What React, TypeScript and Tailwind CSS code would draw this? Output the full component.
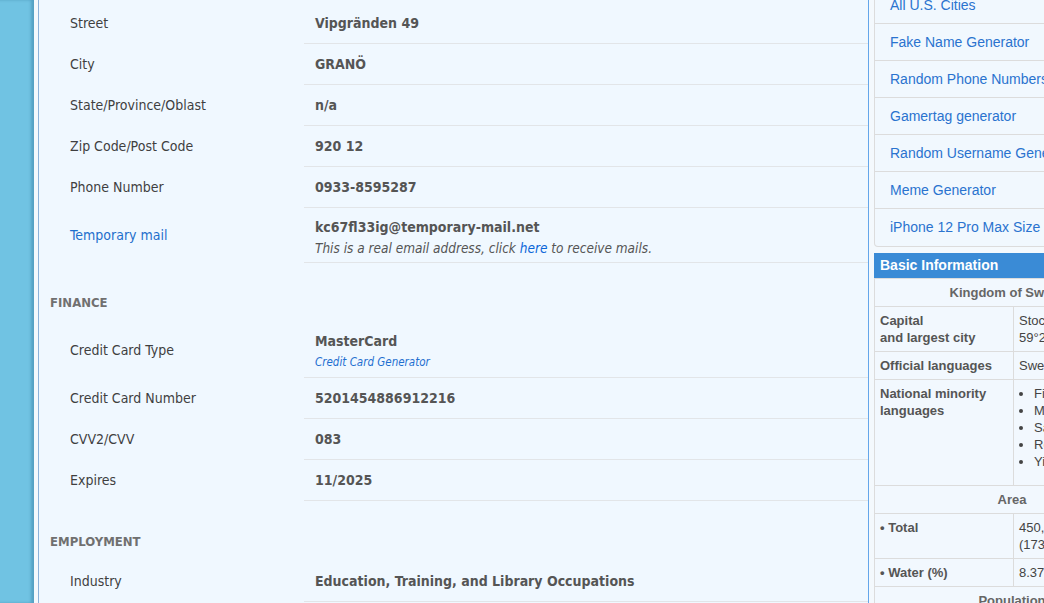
const mainFont = { fontFamily: '"DejaVu Sans Condensed", "DejaVu Sans", sans-serif' };

type Row = { label: string; value: string; h: string; link?: boolean; sub?: React.ReactNode };

const personal: Row[] = [
  { label: "Street", value: "Vipgränden 49", h: "h-[41px]" },
  { label: "City", value: "GRANÖ", h: "h-[41px]" },
  { label: "State/Province/Oblast", value: "n/a", h: "h-[41px]" },
  { label: "Zip Code/Post Code", value: "920 12", h: "h-[41px]" },
  { label: "Phone Number", value: "0933-8595287", h: "h-[41px]" },
  {
    label: "Temporary mail",
    value: "kc67fl33ig@temporary-mail.net",
    h: "h-[55px]",
    link: true,
    sub: (
      <div className="mt-[1px] text-[13.5px] italic leading-[20px] text-[#555]">
        This is a real email address, click <span className="text-[#0a66d8]">here</span> to receive mails.
      </div>
    ),
  },
];

const finance: Row[] = [
  {
    label: "Credit Card Type",
    value: "MasterCard",
    h: "h-[56px]",
    sub: <div className="mt-[1px] text-[11.5px] italic leading-[21px] text-[#1f6fd0]">Credit Card Generator</div>,
  },
  { label: "Credit Card Number", value: "5201454886912216", h: "h-[41px]" },
  { label: "CVV2/CVV", value: "083", h: "h-[41px]" },
  { label: "Expires", value: "11/2025", h: "h-[41px]" },
];

const employment: Row[] = [
  { label: "Industry", value: "Education, Training, and Library Occupations", h: "h-[41px]" },
];

function InfoRows({ rows }: { rows: Row[] }) {
  return (
    <div className="grid grid-cols-[265px_1fr]">
      {rows.map((r) => (
        <div key={r.label} className="contents">
          <div className={`${r.h} flex items-center pl-[31px] text-[14px] ${r.link ? "text-[#1f6fcc]" : "text-[#3f3f3f]"}`}>
            {r.label}
          </div>
          <div
            className={`${r.h} flex flex-col justify-center border-b border-[#e2e5e8] pl-[11px] ${r.sub ? "pt-[5px]" : ""}`}
          >
            <div className="text-[14px] font-bold leading-[20px] text-[#555]">{r.value}</div>
            {r.sub}
          </div>
        </div>
      ))}
    </div>
  );
}

function Heading({ text, h }: { text: string; h: string }) {
  return (
    <div className={`${h} flex items-end pb-[11px] pl-[11px] text-[13px] font-bold leading-4 text-[#707070]`}>{text}</div>
  );
}

const links = [
  "All U.S. Cities",
  "Fake Name Generator",
  "Random Phone Numbers",
  "Gamertag generator",
  "Random Username Generator",
  "Meme Generator",
  "iPhone 12 Pro Max Size",
];

const th = "border border-[#dcdcdc] px-[5px] py-[5px] align-top text-left font-bold text-[#555] leading-[17px]";
const td = "border border-[#dcdcdc] px-[5px] py-[5px] align-top text-[#444] leading-[17px]";
const center = "border border-[#dcdcdc] px-[5px] py-[5px] text-center font-bold text-[#666] leading-[17px]";

export default function App() {
  return (
    <div className="flex h-[603px] w-[1044px] overflow-hidden bg-[#f4f9fd]">
      <div className="w-[34px] shrink-0 bg-[#70c3e3] shadow-[inset_-3px_0_3px_rgba(0,60,100,0.25)]" />
      <div className="w-[4px] shrink-0" />
      <main
        className="w-[831px] shrink-0 border-l border-r border-l-[#8cb2da] border-r-[#64a6ea] bg-[#f0f8ff] pt-[3px]"
        style={mainFont}
      >
        <InfoRows rows={personal} />
        <Heading text="FINANCE" h="h-[59px]" />
        <InfoRows rows={finance} />
        <Heading text="EMPLOYMENT" h="h-[60px]" />
        <InfoRows rows={employment} />
      </main>
      <div className="w-[5px] shrink-0" />
      <aside className="w-[276px] shrink-0 font-['Liberation_Sans',Arial,sans-serif]">
        <div className="-mt-[13px] rounded-b-[4px] border-x border-b border-[#dcdcdc] bg-[#f1f8fe]">
          {links.map((l, i) => (
            <div
              key={l}
              className={`flex h-[37px] items-center whitespace-nowrap pl-[15px] text-[14px] text-[#2a73cf] ${
                i < links.length - 1 ? "border-b border-[#dcdcdc]" : ""
              }`}
            >
              {l}
            </div>
          ))}
        </div>
        <div className="mt-[6px] flex h-[25px] items-center bg-[#3a8bd6] pl-[6px] text-[14px] font-bold text-white">
          Basic Information
        </div>
        <table className="w-[276px] border-collapse bg-[#f2f8fe] text-[13px]">
          <tbody>
            <tr>
              <td colSpan={2} className={center}>
                Kingdom of Sweden
              </td>
            </tr>
            <tr>
              <td className={`${th} w-[139px]`}>
                Capital
                <br />
                and largest city
              </td>
              <td className={td}>
                Stockholm
                <br />
                59°21′N 18°4′E
              </td>
            </tr>
            <tr>
              <td className={th}>Official languages</td>
              <td className={td}>Swedish</td>
            </tr>
            <tr>
              <td className={th}>
                National minority
                <br />
                languages
              </td>
              <td className={td}>
                <ul className="mb-[10px] list-disc pl-[15px]">
                  <li>Finnish</li>
                  <li>Meänkieli</li>
                  <li>Sami</li>
                  <li>Romani</li>
                  <li>Yiddish</li>
                </ul>
              </td>
            </tr>
            <tr>
              <td colSpan={2} className={center}>
                Area
              </td>
            </tr>
            <tr>
              <td className={th}>• Total</td>
              <td className={td}>
                450,295 km2
                <br />
                (173,860 sq mi)
              </td>
            </tr>
            <tr>
              <td className={th}>• Water (%)</td>
              <td className={td}>8.37</td>
            </tr>
            <tr>
              <td colSpan={2} className={center}>
                Population
              </td>
            </tr>
          </tbody>
        </table>
      </aside>
    </div>
  );
}
